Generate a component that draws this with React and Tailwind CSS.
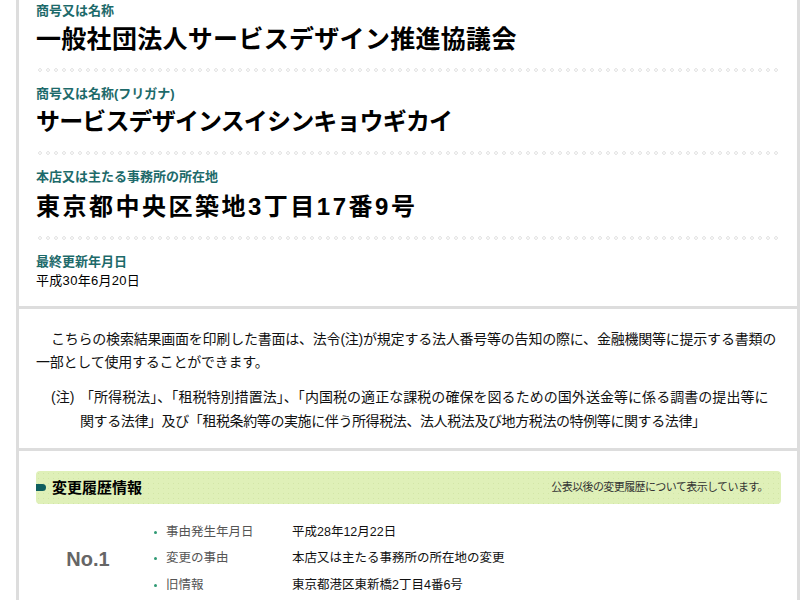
import React from "react";

function Dots() {
  return (
    <div className="h-[4px] my-[13px] bg-[radial-gradient(circle,transparent_0.6px,#e0e0e0_0.9px,#e0e0e0_1.5px,transparent_1.9px)] bg-[length:8px_4px]" />
  );
}

function Label({ children }) {
  return (
    <div className="text-[13px] leading-[18px] font-bold text-[#1d6a6a]">{children}</div>
  );
}

const rows = [
  ["事由発生年月日", "平成28年12月22日"],
  ["変更の事由", "本店又は主たる事務所の所在地の変更"],
  ["旧情報", "東京都港区東新橋2丁目4番6号"],
];

export default function App() {
  return (
    <div className="min-h-screen bg-white pl-4 pr-[11px] text-black font-['Liberation_Sans','Noto_Sans_CJK_JP',sans-serif]">
      <div className="border-x-[3px] border-[#dddddd]">
        <section className="pl-[17px] pr-[16px] pt-[2px] pb-[16px]">
          <Label>商号又は名称</Label>
          <div className="mt-[3px] text-[25px] leading-[32px] font-bold tracking-[0.3px]">
            一般社団法人サービスデザイン推進協議会
          </div>
          <Dots />
          <Label>商号又は名称(フリガナ)</Label>
          <div className="mt-[3px] text-[24px] leading-[32px] font-bold tracking-[-0.85px]">
            サービスデザインスイシンキョウギカイ
          </div>
          <Dots />
          <Label>本店又は主たる事務所の所在地</Label>
          <div className="mt-[5px] text-[24px] leading-[32px] font-bold tracking-[2.5px]">
            東京都中央区築地3丁目17番9号
          </div>
          <Dots />
          <Label>最終更新年月日</Label>
          <div className="mt-[1px] text-[13px] leading-[18px] tracking-[0.3px]">平成30年6月20日</div>
        </section>

        <section className="border-t-[3px] border-[#dddddd] pl-[17px] pr-[16px] pt-[19px] pb-[15px] text-[14px] text-[#111]">
          <p className="leading-[23px] tracking-[-0.22px] whitespace-nowrap">
            <span className="pl-[15px]">こちらの検索結果画面を印刷した書面は、法令(注)が規定する法人番号等の告知の際に、金融機関等に提示する書類の</span>
            <br />
            一部として使用することができます。
          </p>
          <div className="mt-[11px] flex pl-[15px] leading-[24px] whitespace-nowrap">
            <span className="w-[29px] shrink-0">(注)</span>
            <p>
              <span className="tracking-[0.05px]">「所得税法」、「租税特別措置法」、「内国税の適正な課税の確保を図るための国外送金等に係る調書の提出等に</span>
              <br />
              <span className="tracking-[-0.4px]">関する法律」及び「租税条約等の実施に伴う所得税法、法人税法及び地方税法の特例等に関する法律」</span>
            </p>
          </div>
        </section>

        <section className="border-t-[3px] border-[#dddddd] pl-[17px] pr-[16px] pt-[20px] pb-[10px]">
          <div className="h-[33px] rounded-[4px] bg-[#dff0b8] bg-[radial-gradient(circle,#d2e6a6_0.6px,transparent_0.9px)] bg-[length:5px_5px] flex items-center justify-between pr-[13px]">
            <div className="flex items-center">
              <span className="w-[10px] h-[7px] rounded-r-full bg-[#0e5e5e]" />
              <span className="ml-[6px] text-[15px] font-bold leading-[20px]">変更履歴情報</span>
            </div>
            <span className="text-[11px] text-[#333] tracking-[-0.6px]">公表以後の変更履歴について表示しています。</span>
          </div>
          <div className="mt-[15px] flex">
            <div className="w-[104px] flex items-center justify-center text-[20px] font-bold text-[#666]">No.1</div>
            <ul>
              {rows.map(([k, v]) => (
                <li key={k} className="flex items-center h-[26.5px] text-[12.5px]">
                  <span className="ml-[14px] w-[3px] h-[3px] rounded-full bg-[#2f9a74]" />
                  <span className="ml-[9px] w-[126px] text-[#555]">{k}</span>
                  <span className="text-[#111]">{v}</span>
                </li>
              ))}
            </ul>
          </div>
        </section>
      </div>
    </div>
  );
}
